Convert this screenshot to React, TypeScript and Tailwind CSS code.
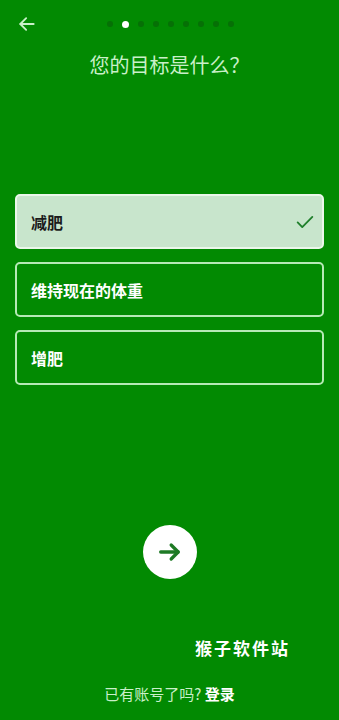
import React, { useState } from 'react';

const goals = ['减肥', '维持现在的体重', '增肥'];

export default function App() {
  const [selected, setSelected] = useState(0);
  const step = 1;

  return (
    <div
      className="w-full h-[720px] bg-[#028a02] flex flex-col overflow-hidden"
      style={{ fontFamily: '"Noto Sans CJK SC", "Noto Sans", sans-serif' }}
    >
      {/* Top bar */}
      <div className="relative h-[48px] flex items-center justify-center">
        <button className="absolute left-[16px] top-[13px] w-[22px] h-[22px] flex items-center justify-center text-[#c9f0c9]">
          <svg width="20" height="20" viewBox="0 0 24 24" fill="none" stroke="currentColor" strokeWidth="2.2" strokeLinecap="round" strokeLinejoin="round">
            <path d="M20 12H4" />
            <path d="M11 5l-7 7 7 7" />
          </svg>
        </button>
        <div className="flex items-center gap-[9px] ml-[2px]">
          {Array.from({ length: 9 }).map((_, i) => (
            <span
              key={i}
              className={i === step ? 'w-[7px] h-[7px] rounded-full bg-white' : 'w-[6px] h-[6px] rounded-full bg-[#067006]'}
            />
          ))}
        </div>
      </div>

      <h1 className="text-center text-[20px] leading-[28px] text-[#c9f0c9] mt-[3px]">您的目标是什么？</h1>

      {/* Options */}
      <div className="flex flex-col gap-[13px] px-[15px] mt-[115px]">
        {goals.map((g, i) => (
          <button
            key={g}
            onClick={() => setSelected(i)}
            className={`h-[55px] rounded-[5px] border-2 flex items-center justify-between pl-[14px] pr-[6px] text-[16px] font-bold text-left ${
              i === selected
                ? 'bg-[#c8e5cc] border-[#eaf7ea] text-[#1b1b1b]'
                : 'bg-transparent border-[#b6eab6] text-white'
            }`}
          >
            <span>{g}</span>
            {i === selected && (
              <svg width="22" height="22" viewBox="0 0 24 24" fill="none" stroke="#1f7f2b" strokeWidth="2" strokeLinecap="round" strokeLinejoin="round">
                <path d="M4 12.5l5 5L20 6.5" />
              </svg>
            )}
          </button>
        ))}
      </div>

      {/* Next */}
      <div className="flex justify-center mt-[140px]">
        <button className="w-[54px] h-[54px] rounded-full bg-white flex items-center justify-center">
          <svg width="28" height="28" viewBox="0 0 24 24" fill="none" stroke="#1e7a25" strokeWidth="2.8" strokeLinecap="round" strokeLinejoin="round">
            <path d="M4 12h15" />
            <path d="M13 6l6 6-6 6" />
          </svg>
        </button>
      </div>

      <div className="flex justify-end pr-[49px] mt-[56px]">
        <span className="text-white text-[17px] font-bold tracking-[2px]">猴子软件站</span>
      </div>

      <div className="text-center text-[15px] mt-[22px] text-[#c9f0c9]">
        已有账号了吗? <span className="font-bold text-white">登录</span>
      </div>
    </div>
  );
}
